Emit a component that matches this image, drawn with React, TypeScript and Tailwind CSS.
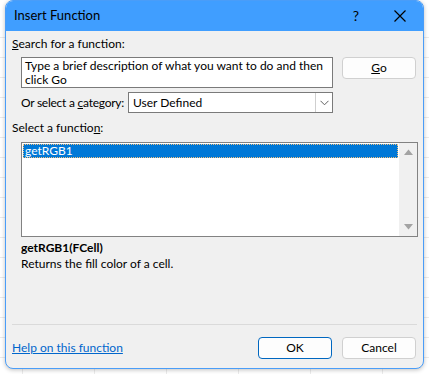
import React from 'react';

const font = { fontFamily: 'Lato, "Liberation Sans", sans-serif' };

const App = () => {
  return (
    <div className="relative w-[429px] h-[374px] bg-white overflow-hidden text-[12px] text-black" style={font}>
      {/* sheet grid behind */}
      <div className="absolute inset-0">
        {[37, 57, 77, 97, 117, 137, 157, 177, 197, 217, 237, 257, 277, 297, 317, 337, 357].map((y) => (
          <div key={y} className="absolute left-0 w-[429px] h-px bg-[#ebebeb]" style={{ top: y }} />
        ))}
        {[22, 94, 166, 238, 310, 382].map((x) => (
          <div key={x} className="absolute top-0 h-[374px] w-px bg-[#ebebeb]" style={{ left: x }} />
        ))}
      </div>

      <div className="relative ml-[5px] w-[419px] h-[369px] rounded-[8px] border border-[#4a9df8] bg-[#f0f0f0] overflow-hidden flex flex-col shadow-[0_1px_4px_rgba(0,0,0,0.25)]">
        {/* title bar */}
        <div className="h-[31px] bg-[#409eff] flex items-center shrink-0 -mt-px -mx-px">
          <span className="pl-[9px] text-[13px]">Insert Function</span>
          <span className="ml-auto text-[14px] mr-[34px]">?</span>
          <svg width="14" height="14" viewBox="0 0 14 14" className="mr-[17px]">
            <path d="M1.5 1.5 L12.5 12.5 M12.5 1.5 L1.5 12.5" stroke="#000" strokeWidth="1.2" />
          </svg>
        </div>

        <div className="pl-[6px] pr-[6px] flex flex-col">
          <div className="mt-[5px] h-[16px] leading-[16px]">
            <span className="underline">S</span>earch for a function:
          </div>

          <div className="mt-[5px] flex">
            <div className="ml-[9px] w-[312px] h-[31px] border border-[#7a7a7a] bg-white px-[3px] leading-[14px] pt-px text-[12px]">
              Type a brief description of what you want to do and then click Go
            </div>
            <button className="ml-[9px] w-[74px] h-[22px] rounded-[4px] border border-[#d0d0d0] bg-[#fdfdfd] text-[12px]">
              <span className="underline">G</span>o
            </button>
          </div>

          <div className="mt-[4px] flex items-center">
            <span className="ml-[9px] w-[107px] leading-[16px] whitespace-nowrap tracking-[-0.25px]">
              Or select a <span className="underline">c</span>ategory:
            </span>
            <div className="w-[205px] h-[21px] border border-[#7a7a7a] bg-white flex items-center">
              <span className="pl-[4px] flex-1">User Defined</span>
              <div className="w-[17px] h-[19px] border-l border-[#cfcfcf] flex items-center justify-center">
                <svg width="9" height="6" viewBox="0 0 9 6">
                  <path d="M0.5 0.8 L4.5 4.8 L8.5 0.8" stroke="#606060" strokeWidth="1" fill="none" />
                </svg>
              </div>
            </div>
          </div>

          <div className="mt-[7px] h-[16px] leading-[16px]">
            Select a functio<span className="underline">n</span>:
          </div>

          <div className="mt-[6px] ml-[9px] w-[397px] h-[95px] border border-[#828282] bg-white flex">
            <div className="flex-1 p-px">
              <div className="h-[14px] bg-[#0078d7] text-white leading-[13px] pl-[2px] outline outline-1 outline-dotted outline-[#f0c080] -outline-offset-1">
                getRGB1
              </div>
            </div>
            <div className="w-[18px] bg-[#f0f0f0] flex flex-col items-center justify-between py-[6px]">
              <svg width="9" height="6" viewBox="0 0 9 6">
                <path d="M0 6 L4.5 0.5 L9 6 Z" fill="#a3a3a3" />
              </svg>
              <svg width="9" height="6" viewBox="0 0 9 6">
                <path d="M0 0 L4.5 5.5 L9 0 Z" fill="#a3a3a3" />
              </svg>
            </div>
          </div>

          <div className="mt-[3px] ml-[9px] font-bold leading-[16px]">getRGB1(FCell)</div>
          <div className="ml-[9px] leading-[16px]">Returns the fill color of a cell.</div>

          <div className="mt-[52px] h-px bg-[#dadada] w-[405px]" />

          <div className="mt-[12px] flex items-center">
            <span className="text-[#0066cc] underline leading-[16px]">Help on this function</span>
            <button className="ml-auto w-[74px] h-[22px] rounded-[4px] border border-[#0067c0] bg-[#fdfdfd] text-[12px]">
              OK
            </button>
            <button className="ml-[10px] mr-px w-[74px] h-[22px] rounded-[4px] border border-[#d0d0d0] bg-[#fdfdfd] text-[12px]">
              Cancel
            </button>
          </div>
        </div>
      </div>
    </div>
  );
};

export default App;
